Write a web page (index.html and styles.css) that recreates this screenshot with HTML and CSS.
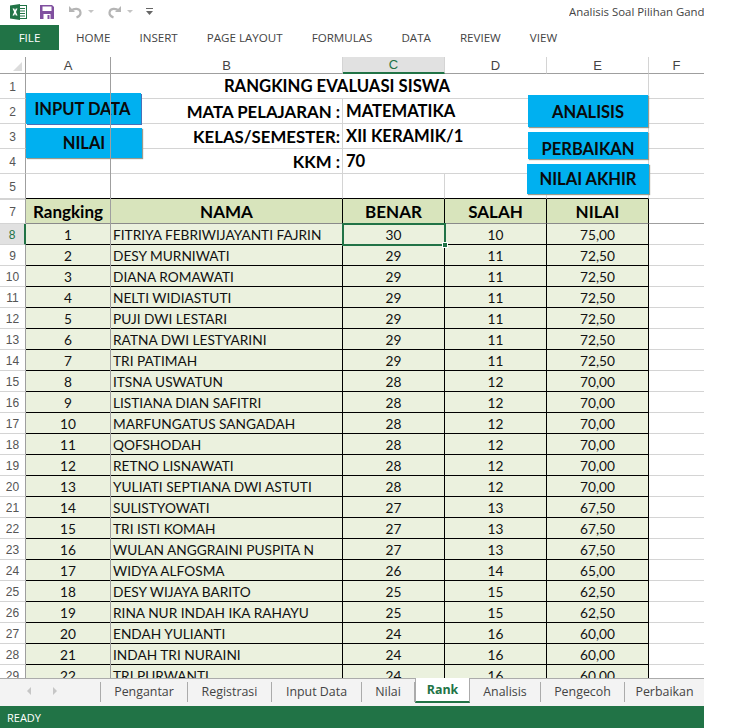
FILE: index.html
```html
<!DOCTYPE html>
<html lang="en">

<head>
    <meta charset="UTF-8">
    <title>Analisis Soal Pilihan Ganda - Excel</title>
    <link rel="stylesheet" href="styles.css">
</head>

<body>
    <div class="app">
        <!-- quick access + title -->
        <div class="titleBar">
            <svg class="xlIcon" width="17" height="16" viewBox="0 0 17 16">
                <rect x="7" y="1.5" width="9.5" height="13" fill="#fff" stroke="#217346" />
                <path d="M10 4.5h5M10 7h5M10 9.500h5M10 12h5" stroke="#217346" fill="none" />
                <path d="M0 1.500L10 0v16L0 14.500z" fill="#217346" />
                <path d="M2.500 4.500h1.800L5 6.300l.8-1.800h1.700L6 8l1.600 3.500H5.800L5 9.600l-.8 1.900H2.500L4.100 8z" fill="#fff" />
            </svg>
            <svg class="saveIcon" width="14" height="14" viewBox="0 0 14 14">
                <path d="M0 0h12l2 2v12H0z" fill="#80509f" />
                <rect x="2.500" y="1.500" width="9" height="4.500" fill="#fff" />
                <rect x="3.500" y="9" width="7" height="5" fill="#fff" />
                <rect x="7.500" y="10" width="2" height="4" fill="#80509f" />
            </svg>
            <svg class="undoIcon" width="15" height="14" viewBox="0 0 15 14">
                <path d="M1 1v6h6z" fill="#b5b5b5" />
                <path d="M3 6c3-3 9-3 9.500 1.500c.2 2.500-1.500 4-4 5" fill="none" stroke="#b5b5b5" stroke-width="2.200" />
            </svg>
            <span class="miniArrow"></span>
            <svg class="redoIcon" width="15" height="14" viewBox="0 0 15 14">
                <path d="M14 1v6H8z" fill="#b5b5b5" />
                <path d="M12 6C9 3 3 3 2.500 7.500c-.2 2.500 1.500 4 4 5" fill="none" stroke="#b5b5b5" stroke-width="2.200" />
            </svg>
            <span class="miniArrow"></span>
            <svg class="moreIcon" width="7" height="8" viewBox="0 0 7 8">
                <path d="M0 0h7v1H0zM0 3h7L3.500 7z" fill="#666" />
            </svg>
            <span class="docTitle">Analisis Soal Pilihan Ganda - Excel</span>
        </div>

        <div class="ribbonTabs">
            <div class="fileTab">FILE</div>
            <span>HOME</span>
            <span>INSERT</span>
            <span>PAGE LAYOUT</span>
            <span>FORMULAS</span>
            <span>DATA</span>
            <span>REVIEW</span>
            <span>VIEW</span>
        </div>

        <div class="sheet">
            <table class="grid">
                <colgroup>
                    <col class="c0">
                    <col class="c1">
                    <col class="c2">
                    <col class="c3">
                    <col class="c3">
                    <col class="c3">
                    <col class="c4">
                </colgroup>
                <tr class="colHead">
                    <th class="corner"><span class="cornerMark"></span></th>
                    <th>A</th>
                    <th>B</th>
                    <th class="colSel">C</th>
                    <th>D</th>
                    <th>E</th>
                    <th class="last">F</th>
                </tr>
                <tr class="tall">
                    <th class="rn">1</th>
                    <td colspan="5" class="title">RANGKING EVALUASI SISWA</td>
                    <td></td>
                </tr>
                <tr class="tall">
                    <th class="rn">2</th>
                    <td></td>
                    <td class="lbl">MATA PELAJARAN :</td>
                    <td colspan="3" class="val">MATEMATIKA</td>
                    <td></td>
                </tr>
                <tr class="tall">
                    <th class="rn">3</th>
                    <td></td>
                    <td class="lbl">KELAS/SEMESTER:</td>
                    <td colspan="3" class="val">XII KERAMIK/1</td>
                    <td></td>
                </tr>
                <tr class="tall">
                    <th class="rn">4</th>
                    <td></td>
                    <td class="lbl">KKM :</td>
                    <td colspan="3" class="val">70</td>
                    <td></td>
                </tr>
                <tr class="tall above">
                    <th class="rn">5</th>
                    <td></td>
                    <td></td>
                    <td></td>
                    <td></td>
                    <td></td>
                    <td></td>
                </tr>
                <tr class="tall head">
                    <th class="rn hidden6">7</th>
                    <td>Rangking</td>
                    <td>NAMA</td>
                    <td>BENAR</td>
                    <td>SALAH</td>
                    <td>NILAI</td>
                    <td></td>
                </tr>
                <tr class="data">
                    <th class="rn rowSel">8</th>
                    <td>1</td>
                    <td>FITRIYA FEBRIWIJAYANTI FAJRIN</td>
                    <td>30</td>
                    <td>10</td>
                    <td>75,00</td>
                    <td></td>
                </tr>
                <tr class="data">
                    <th class="rn">9</th>
                    <td>2</td>
                    <td>DESY MURNIWATI</td>
                    <td>29</td>
                    <td>11</td>
                    <td>72,50</td>
                    <td></td>
                </tr>
                <tr class="data">
                    <th class="rn">10</th>
                    <td>3</td>
                    <td>DIANA ROMAWATI</td>
                    <td>29</td>
                    <td>11</td>
                    <td>72,50</td>
                    <td></td>
                </tr>
                <tr class="data">
                    <th class="rn">11</th>
                    <td>4</td>
                    <td>NELTI WIDIASTUTI</td>
                    <td>29</td>
                    <td>11</td>
                    <td>72,50</td>
                    <td></td>
                </tr>
                <tr class="data">
                    <th class="rn">12</th>
                    <td>5</td>
                    <td>PUJI DWI LESTARI</td>
                    <td>29</td>
                    <td>11</td>
                    <td>72,50</td>
                    <td></td>
                </tr>
                <tr class="data">
                    <th class="rn">13</th>
                    <td>6</td>
                    <td>RATNA DWI LESTYARINI</td>
                    <td>29</td>
                    <td>11</td>
                    <td>72,50</td>
                    <td></td>
                </tr>
                <tr class="data">
                    <th class="rn">14</th>
                    <td>7</td>
                    <td>TRI PATIMAH</td>
                    <td>29</td>
                    <td>11</td>
                    <td>72,50</td>
                    <td></td>
                </tr>
                <tr class="data">
                    <th class="rn">15</th>
                    <td>8</td>
                    <td>ITSNA USWATUN</td>
                    <td>28</td>
                    <td>12</td>
                    <td>70,00</td>
                    <td></td>
                </tr>
                <tr class="data">
                    <th class="rn">16</th>
                    <td>9</td>
                    <td>LISTIANA DIAN SAFITRI</td>
                    <td>28</td>
                    <td>12</td>
                    <td>70,00</td>
                    <td></td>
                </tr>
                <tr class="data">
                    <th class="rn">17</th>
                    <td>10</td>
                    <td>MARFUNGATUS SANGADAH</td>
                    <td>28</td>
                    <td>12</td>
                    <td>70,00</td>
                    <td></td>
                </tr>
                <tr class="data">
                    <th class="rn">18</th>
                    <td>11</td>
                    <td>QOFSHODAH</td>
                    <td>28</td>
                    <td>12</td>
                    <td>70,00</td>
                    <td></td>
                </tr>
                <tr class="data">
                    <th class="rn">19</th>
                    <td>12</td>
                    <td>RETNO LISNAWATI</td>
                    <td>28</td>
                    <td>12</td>
                    <td>70,00</td>
                    <td></td>
                </tr>
                <tr class="data">
                    <th class="rn">20</th>
                    <td>13</td>
                    <td>YULIATI SEPTIANA DWI ASTUTI</td>
                    <td>28</td>
                    <td>12</td>
                    <td>70,00</td>
                    <td></td>
                </tr>
                <tr class="data">
                    <th class="rn">21</th>
                    <td>14</td>
                    <td>SULISTYOWATI</td>
                    <td>27</td>
                    <td>13</td>
                    <td>67,50</td>
                    <td></td>
                </tr>
                <tr class="data">
                    <th class="rn">22</th>
                    <td>15</td>
                    <td>TRI ISTI KOMAH</td>
                    <td>27</td>
                    <td>13</td>
                    <td>67,50</td>
                    <td></td>
                </tr>
                <tr class="data">
                    <th class="rn">23</th>
                    <td>16</td>
                    <td>WULAN ANGGRAINI PUSPITA N</td>
                    <td>27</td>
                    <td>13</td>
                    <td>67,50</td>
                    <td></td>
                </tr>
                <tr class="data">
                    <th class="rn">24</th>
                    <td>17</td>
                    <td>WIDYA ALFOSMA</td>
                    <td>26</td>
                    <td>14</td>
                    <td>65,00</td>
                    <td></td>
                </tr>
                <tr class="data">
                    <th class="rn">25</th>
                    <td>18</td>
                    <td>DESY WIJAYA BARITO</td>
                    <td>25</td>
                    <td>15</td>
                    <td>62,50</td>
                    <td></td>
                </tr>
                <tr class="data">
                    <th class="rn">26</th>
                    <td>19</td>
                    <td>RINA NUR INDAH IKA RAHAYU</td>
                    <td>25</td>
                    <td>15</td>
                    <td>62,50</td>
                    <td></td>
                </tr>
                <tr class="data">
                    <th class="rn">27</th>
                    <td>20</td>
                    <td>ENDAH YULIANTI</td>
                    <td>24</td>
                    <td>16</td>
                    <td>60,00</td>
                    <td></td>
                </tr>
                <tr class="data">
                    <th class="rn">28</th>
                    <td>21</td>
                    <td>INDAH TRI NURAINI</td>
                    <td>24</td>
                    <td>16</td>
                    <td>60,00</td>
                    <td></td>
                </tr>
                <tr class="data">
                    <th class="rn">29</th>
                    <td>22</td>
                    <td>TRI PURWANTI</td>
                    <td>24</td>
                    <td>16</td>
                    <td>60,00</td>
                    <td></td>
                </tr>
            </table>

            <!-- shapes and panes lying over the cells -->
            <div class="btn btnInput">INPUT DATA</div>
            <div class="btn btnNilai">NILAI</div>
            <div class="btn btnAnalisis">ANALISIS</div>
            <div class="btn btnPerbaikan">PERBAIKAN</div>
            <div class="btn btnAkhir">NILAI AKHIR</div>
            <div class="freezeV"></div>
            <div class="freezeH"></div>
            <div class="cellCursor"><span class="cursorHandle"></span></div>
        </div>

        <div class="sheetTabs">
            <div class="tabNav">
                <span class="navPrev"></span>
                <span class="navNext"></span>
            </div>
            <div class="tab">Pengantar</div>
            <div class="tab">Registrasi</div>
            <div class="tab">Input Data</div>
            <div class="tab">Nilai</div>
            <div class="tab active">Rank</div>
            <div class="tab">Analisis</div>
            <div class="tab">Pengecoh</div>
            <div class="tab noLine">Perbaikan</div>
        </div>

        <div class="statusBar">READY</div>
    </div>
</body>

</html>
```

FILE: styles.css
```css
* {
    margin: 0;
    padding: 0;
    box-sizing: border-box;
}

body {
    background-color: #fff;
    font-family: "Open Sans", sans-serif;
}

.app {
    width: 704px;
    height: 728px;
    display: flex;
    flex-direction: column;
    overflow: hidden;
}

/* title bar */
.titleBar {
    height: 25px;
    display: flex;
    align-items: center;
    padding-left: 10px;
    padding-bottom: 2px;
}

.saveIcon {
    margin-left: 13px;
}

.undoIcon {
    margin-left: 14px;
}

.redoIcon {
    margin-left: 13px;
}

.moreIcon {
    margin-left: 13px;
}

.miniArrow {
    width: 0;
    height: 0;
    margin-left: 5px;
    border-left: 3px solid transparent;
    border-right: 3px solid transparent;
    border-top: 3px solid #c4c4c4;
}

.docTitle {
    margin-left: auto;
    width: 135px;
    white-space: nowrap;
    overflow: hidden;
    font-size: 11.400px;
    color: #444;
}

/* ribbon */
.ribbonTabs {
    height: 25px;
    display: flex;
    align-items: center;
    gap: 29px;
    font-size: 11.600px;
    color: #444;
}

.fileTab {
    width: 59px;
    height: 25px;
    margin-right: -12px;
    background-color: #217346;
    color: #fff;
    display: flex;
    justify-content: center;
    align-items: center;
}

/* worksheet */
.sheet {
    position: relative;
    height: 621px;
    margin-top: 7px;
    overflow: hidden;
    flex-shrink: 0;
}

.grid {
    width: 704px;
    table-layout: fixed;
    border-collapse: separate;
    border-spacing: 0;
    font-family: "Lato", sans-serif;
    color: #000;
}

.c0 {
    width: 26px;
}

.c1 {
    width: 85px;
}

.c2 {
    width: 232px;
}

.c3 {
    width: 102px;
}

.c4 {
    width: 55px;
}

.grid td {
    border-right: 1px solid #d4d4d4;
    border-bottom: 1px solid #d4d4d4;
    white-space: nowrap;
    overflow: hidden;
}

.grid td:last-child {
    border-right: 0;
}

.colHead {
    height: 17px;
}

.colHead th {
    border-right: 1px solid #d4d4d4;
    border-bottom: 1px solid #9f9f9f;
    font-family: "Liberation Sans", sans-serif;
    font-size: 13px;
    font-weight: normal;
    color: #444;
    vertical-align: middle;
}

.colHead th.last {
    border-right: 0;
}

.colHead .corner {
    position: relative;
    border-right: 1px solid #9f9f9f;
}

.cornerMark {
    position: absolute;
    left: 13px;
    top: 5px;
    border-left: 9px solid transparent;
    border-bottom: 9px solid #dcdcdc;
}

.colHead .colSel {
    background-color: #e1e1e1;
    border-bottom: 2px solid #217346;
    color: #217346;
}

.rn {
    border-right: 1px solid #9f9f9f;
    border-bottom: 1px solid #d4d4d4;
    padding-top: 2px;
    font-family: "Liberation Sans", sans-serif;
    font-size: 12px;
    font-weight: normal;
    color: #555;
    vertical-align: middle;
}

.rowSel {
    background-color: #e1e1e1;
    border-right: 2px solid #217346;
    color: #217346;
}

.hidden6 {
    box-shadow: inset 0 1px 0 #d4d4d4;
}

.tall {
    height: 25px;
}

.title {
    text-align: center;
    font-size: 16.700px;
    font-weight: bold;
}

.grid .lbl {
    text-align: right;
    padding-right: 2px;
    font-size: 16.800px;
    font-weight: bold;
}

.val {
    padding-left: 3px;
    font-size: 16.600px;
    font-weight: bold;
}

.grid .above td {
    border-bottom-color: #000;
}

.grid .above td:last-child {
    border-bottom-color: #d4d4d4;
}

.grid .head td {
    background-color: #d8e4bc;
    border-right-color: #000;
    border-bottom-color: #8a8a8a;
    text-align: center;
    font-size: 17px;
    font-weight: bold;
}

.grid .head td:last-child,
.grid .data td:last-child {
    background-color: transparent;
    border-bottom-color: #d4d4d4;
    border-right: 0;
}

.data {
    height: 21px;
}

.grid .data td {
    background-color: #ebf1de;
    border-right-color: #000;
    border-bottom-color: #000;
    padding-top: 2px;
    text-align: center;
    font-size: 13.700px;
    line-height: 18px;
    color: #111;
}

.grid .data td:nth-child(3) {
    text-align: left;
    padding-left: 2px;
}

/* buttons over the sheet */
.btn {
    position: absolute;
    display: flex;
    justify-content: center;
    align-items: center;
    background-color: #00b0f0;
    box-shadow: 1px 1px 1px #9a9a8c;
    font-family: "Lato", sans-serif;
    font-size: 16.500px;
    font-weight: bold;
    color: #0a0a0a;
}

.btnInput {
    left: 26px;
    top: 36px;
    width: 115px;
    height: 31px;
    padding: 0 2px 0 0;
    box-shadow: 1px 1px 0 #4a6fb5;
}

.btnNilai {
    left: 26px;
    top: 71px;
    width: 116px;
    height: 30px;
}

.btnAnalisis {
    left: 528px;
    top: 38px;
    width: 120px;
    height: 32px;
    padding-top: 1px;
}

.btnPerbaikan {
    left: 528px;
    top: 75px;
    width: 120px;
    height: 27px;
    padding-top: 6px;
}

.btnAkhir {
    left: 527px;
    top: 107px;
    width: 122px;
    height: 30px;
}

.freezeV {
    position: absolute;
    left: 110px;
    top: 0;
    bottom: 0;
    width: 1px;
    background-color: #9f9f9f;
}

.freezeH {
    position: absolute;
    left: 649px;
    right: 0;
    top: 166px;
    height: 1px;
    background-color: #9f9f9f;
}

.cellCursor {
    position: absolute;
    left: 342px;
    top: 166px;
    width: 104px;
    height: 23px;
    border: 2px solid #217346;
}

.cursorHandle {
    position: absolute;
    right: -4px;
    bottom: -4px;
    width: 6px;
    height: 6px;
    background-color: #217346;
    border: 1px solid #fff;
}

/* sheet tabs */
.sheetTabs {
    height: 28px;
    display: grid;
    grid-template-columns: 101px 87px 84px 90px 53px 55px 71px 84px 79px;
    background-color: #f3f3f3;
    border-top: 1px solid #ababab;
    flex-shrink: 0;
}

.tabNav {
    display: flex;
    align-items: center;
    gap: 22px;
    padding: 0 0 3px 27px;
    border-right: 1px solid #ababab;
    margin: 3px 0 4px;
}

.navPrev {
    border-top: 4px solid transparent;
    border-bottom: 4px solid transparent;
    border-right: 4px solid #c6c6c6;
}

.navNext {
    border-top: 4px solid transparent;
    border-bottom: 4px solid transparent;
    border-left: 4px solid #c6c6c6;
}

.tab {
    display: flex;
    justify-content: center;
    align-items: center;
    margin: 3px 0 4px;
    padding-bottom: 2px;
    border-right: 1px solid #ababab;
    font-size: 12.400px;
    color: #444;
}

.tab.noLine {
    border-right: 0;
}

.tab.active {
    margin: -1px 0 3px;
    padding-bottom: 0;
    background-color: #fff;
    border-left: 1px solid #ababab;
    border-right: 1px solid #ababab;
    border-bottom: 2px solid #217346;
    font-weight: bold;
    color: #217346;
}

.statusBar {
    flex: 1;
    background-color: #217346;
    color: #fff;
    font-size: 11px;
    display: flex;
    align-items: center;
    padding-left: 7px;
}
```
